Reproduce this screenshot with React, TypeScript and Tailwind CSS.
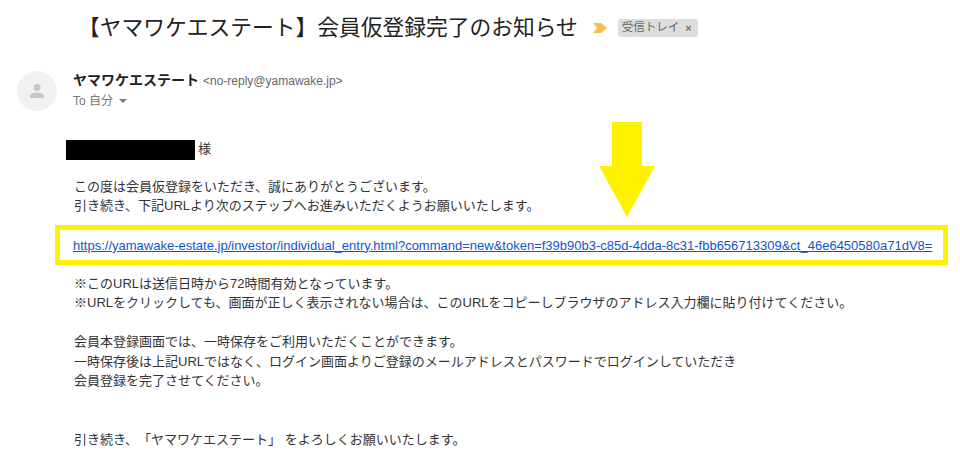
import React from "react";

const bodyFont = "font-['Liberation_Sans','Noto_Sans_CJK_JP',sans-serif]";

function Line({ children }: { children?: React.ReactNode }) {
  return <p className="h-[19.5px] whitespace-nowrap text-[13px] leading-[19.5px] text-[#333]">{children}</p>;
}

export default function App() {
  return (
    <div className={`relative h-[472px] w-[960px] overflow-hidden bg-white [text-spacing-trim:space-all] ${bodyFont}`}>
      {/* subject */}
      <div className="flex h-[56px] items-center pl-[78px]">
        <h1 className="whitespace-nowrap text-[21.75px] font-normal leading-none text-[#222]">
          【ヤマワケエステート】会員仮登録完了のお知らせ
        </h1>
        <svg className="ml-[15px]" width="14" height="10" viewBox="0 0 14 10">
          <path d="M0 0h8l6 5-6 5H0l4-5z" fill="#f4bf4f" />
        </svg>
        <span className="ml-[11px] flex h-[18px] items-center rounded-[3px] bg-[#ddd] pl-[4px] pr-[6px] text-[11.5px] text-[#666]">
          受信トレイ<span className="ml-[6px] text-[11px] font-bold text-[#777]">×</span>
        </span>
      </div>

      {/* sender */}
      <div className="mt-[15px] flex pl-[17px]">
        <div className="flex h-[40px] w-[40px] items-center justify-center rounded-full bg-[#f1f1f1]">
          <svg width="16" height="16" viewBox="0 0 16 16">
            <circle cx="8" cy="4.5" r="3.5" fill="#c8c8c8" />
            <path d="M1 15v-2c0-2.5 4.500-3.500 7-3.500s7 1 7 3.500v2z" fill="#c8c8c8" />
          </svg>
        </div>
        <div className="ml-[16px]">
          <div className="flex h-[19px] items-center whitespace-nowrap">
            <span className="text-[14px] font-bold text-[#222]">ヤマワケエステート</span>
            <span className="ml-[4px] text-[12px] text-[#666]">&lt;no-reply@yamawake.jp&gt;</span>
          </div>
          <div className="flex h-[21px] items-center text-[12px] text-[#777]">
            To 自分
            <svg className="ml-[6px]" width="8" height="4" viewBox="0 0 8 4">
              <path d="M0 0h8L4 4z" fill="#777" />
            </svg>
          </div>
        </div>
      </div>

      {/* mail body */}
      <div className="pt-[29px]">
        <div className="flex h-[20px] items-center pl-[66px]">
          <div className="h-[20px] w-[129px] bg-black" />
          <span className="mb-[3px] ml-[3px] text-[13px] text-[#333]">様</span>
        </div>

        <div className="mt-[16.5px] pl-[74px]">
          <Line>この度は会員仮登録をいただき、誠にありがとうございます。</Line>
          <Line>引き続き、下記URLより次のステップへお進みいただくようお願いいたします。</Line>
        </div>

        <div className="ml-[55px] mt-[9.5px] flex h-[40px] w-[893px] items-center border-[5px] border-[#fff200] pl-[13px] pt-[1px]">
          <a className="whitespace-nowrap text-[13px] text-[#1155cc] underline">
            https://yamawake-estate.jp/investor/individual_entry.html?command=new&amp;token=f39b90b3-c85d-4dda-8c31-fbb656713309&amp;ct_46e6450580a71dV8=
          </a>
        </div>

        <div className="mt-[8.5px] pl-[74px]">
          <Line>※このURLは送信日時から72時間有効となっています。</Line>
          <Line>※URLをクリックしても、画面が正しく表示されない場合は、このURLをコピーしブラウザのアドレス入力欄に貼り付けてください。</Line>
          <Line />
          <Line>会員本登録画面では、一時保存をご利用いただくことができます。</Line>
          <Line>一時保存後は上記URLではなく、ログイン画面よりご登録のメールアドレスとパスワードでログインしていただき</Line>
          <Line>会員登録を完了させてください。</Line>
          <Line />
          <Line />
          <Line>引き続き、「ヤマワケエステート」 をよろしくお願いいたします。</Line>
        </div>
      </div>

      {/* yellow arrow over the mail */}
      <svg className="absolute left-[599px] top-[122px]" width="56" height="95" viewBox="0 0 56 95">
        <path d="M13 0h30v44h13L28 95 0 44h13z" fill="#fff200" />
      </svg>
    </div>
  );
}
